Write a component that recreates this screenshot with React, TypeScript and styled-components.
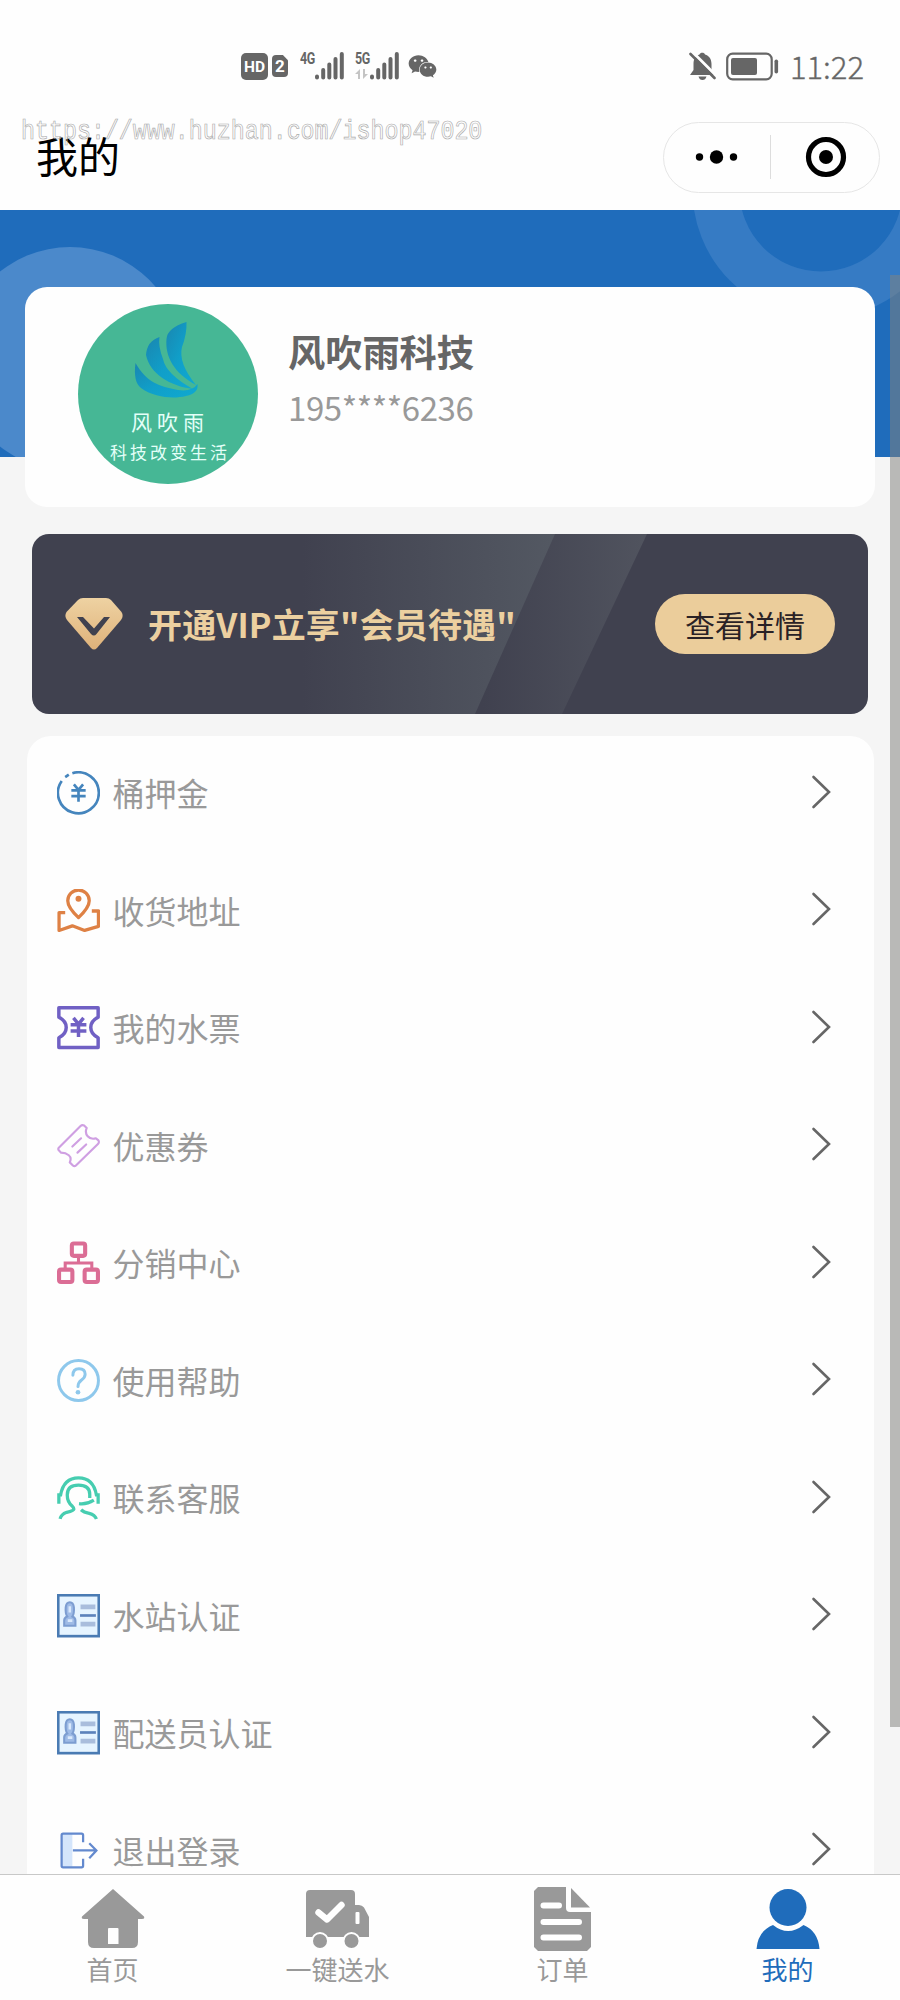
import React from "react";
import styled, { createGlobalStyle } from "styled-components";
import { FaWeixin } from "react-icons/fa";

const GlobalStyle = createGlobalStyle`
  * { box-sizing: border-box; }
  body {
    margin: 0;
    background: #fff;
    font-family: "Noto Sans CJK SC", "Noto Sans", sans-serif;
  }
  svg { display: block; flex: none; }
`;

const Page = styled.div`
  position: relative;
  width: 900px;
  height: 2000px;
  display: flex;
  flex-direction: column;
  overflow: hidden;
  background: #fefefe;
`;

const StatusBar = styled.div`
  height: 112px;
  padding: 20px 36px 0 241px;
  display: flex;
  justify-content: space-between;
  align-items: center;
  color: #666;
`;

const StatusGroup = styled.div<{ $gap?: number }>`
  display: flex;
  align-items: center;
  gap: ${(p) => p.$gap ?? 0}px;
`;

const HdBadge = styled.span`
  width: 27px;
  height: 27px;
  border-radius: 5px;
  background: #666;
  color: #fff;
  font: 700 15.5px/28px Roboto, sans-serif;
  text-align: center;
  margin-right: 4px;
`;

const SimBadge = styled.span`
  width: 16px;
  height: 22px;
  margin-right: 12px;
  border-radius: 4px;
  clip-path: polygon(0 0, 68% 0, 100% 24%, 100% 100%, 0 100%);
  background: #666;
  color: #fff;
  font: 700 17px/23px Roboto, sans-serif;
  text-align: center;
`;

const Signal = styled.div<{ $gap: number }>`
  display: flex;
  align-items: flex-start;
  height: 28px;
  margin-right: ${(p) => p.$gap}px;
`;

const SignalName = styled.div`
  width: 15px;
  display: flex;
  flex-direction: column;
  gap: 3px;
  font: 700 16px/14px Roboto, sans-serif;
  letter-spacing: -0.5px;
`;

const SignalText = styled.span`
  display: block;
  width: 19px;
  height: 14px;
  transform: scaleX(0.78);
  transform-origin: left;
`;

const Clock = styled.span`
  font-size: 31px;
  line-height: 32px;
  font-weight: 300;
  -webkit-text-stroke: 0.3px #666;
  margin-left: 1px;
`;

const TitleBar = styled.div`
  height: 98px;
  padding: 0 20px 8px 36px;
  display: flex;
  justify-content: space-between;
  align-items: center;
`;

const Title = styled.h1`
  margin: -4px 0 0;
  font-size: 42px;
  line-height: 60px;
  font-weight: 400;
  color: #000;
`;

const Watermark = styled.div`
  position: absolute;
  left: 21px;
  top: 117px;
  font: 400 23.3px/30px "Liberation Mono", monospace;
  color: transparent;
  -webkit-text-stroke: 0.6px #aaa;
  transform: scaleY(1.16);
  white-space: nowrap;
`;

const Capsule = styled.div`
  width: 217px;
  height: 71px;
  border: 1.5px solid #e6e6e6;
  border-radius: 36px;
  display: flex;
  align-items: center;
`;

const CapsuleSide = styled.div<{ $divider?: boolean }>`
  flex: 1;
  height: 44px;
  display: flex;
  align-items: center;
  justify-content: center;
  padding-left: ${(p) => (p.$divider ? 0 : 3)}px;
  border-right: ${(p) => (p.$divider ? "1px solid #ddd" : "none")};
`;

const Content = styled.main`
  position: relative;
  height: 1664px;
  padding: 77px 25px 0;
  overflow: hidden;
  background: linear-gradient(#1f6cbb 0 247px, #f5f5f5 247px);
`;

const BannerArt = styled.svg`
  position: absolute;
  left: 0;
  top: 0;
`;

const ScrollThumb = styled.div`
  position: absolute;
  right: 0;
  top: 65px;
  width: 10px;
  height: 1452px;
  background: rgba(130, 130, 126, 0.52);
`;

const ProfileCard = styled.section`
  position: relative;
  height: 220px;
  padding: 17px 53px;
  border-radius: 22px;
  background: #fefefe;
  display: flex;
  gap: 30px;
`;

const Avatar = styled.div`
  position: relative;
  width: 180px;
  height: 180px;
  border-radius: 50%;
  background: #46b795;
  overflow: hidden;
  color: #e4fff8;
  text-align: center;
  display: flex;
  flex-direction: column;
  align-items: center;
`;

const AvatarName = styled.span`
  margin-top: 7px;
  font-size: 21px;
  line-height: 24px;
  letter-spacing: 5px;
  padding-left: 4px;
`;

const AvatarSlogan = styled.span`
  margin-top: 9px;
  font-size: 17px;
  line-height: 20px;
  letter-spacing: 3px;
  padding-left: 4px;
  white-space: nowrap;
`;

const Identity = styled.div`
  padding-top: 25px;
`;

const UserName = styled.div`
  font-size: 37.2px;
  line-height: 44px;
  font-weight: 700;
  color: #666;
`;

const Phone = styled.div`
  margin-top: 14px;
  font-size: 33px;
  line-height: 40px;
  letter-spacing: -0.4px;
  color: #999;
`;

const VipCard = styled.section`
  position: relative;
  height: 180px;
  margin: 27px 7px 0;
  padding: 0 33px 0 32px;
  border-radius: 17px;
  overflow: hidden;
  background: #40414f;
  display: flex;
  align-items: center;
`;

const VipGem = styled.svg`
  position: relative;
`;

const VipText = styled.div`
  position: relative;
  flex: 1;
  margin-left: 24px;
  font-size: 34px;
  line-height: 48px;
  letter-spacing: 0.15px;
  font-weight: 700;
  color: #ecd0a0;
  white-space: nowrap;
`;

const VipButton = styled.button`
  position: relative;
  width: 180px;
  height: 60px;
  padding: 0;
  border: 0;
  border-radius: 30px;
  background: #ebcd9b;
  color: #2a2226;
  font: 400 30px/58px "Noto Sans CJK SC", sans-serif;
`;

const MenuCard = styled.ul`
  position: relative;
  list-style: none;
  margin: 22px 1px 0 2px;
  padding: 0 43.5px 0 30px;
  border-radius: 24px 24px 0 0;
  background: #fefefe;
`;

const MenuRow = styled.li`
  height: 117.5px;
  padding-top: 33px;
  display: flex;
  align-items: flex-start;
`;

const MenuIconBox = styled.span`
  margin-top: 2px;
`;

const MenuLabel = styled.span`
  flex: 1;
  margin-left: 12.5px;
  font-size: 32px;
  line-height: 46px;
  color: #999;
`;

const ChevronBox = styled.span`
  margin-top: 5.5px;
`;

const TabBar = styled.nav`
  height: 126px;
  border-top: 1px solid #c8c8c8;
  background: #fefefe;
  display: flex;
`;

const Tab = styled.a<{ $active?: boolean }>`
  flex: 1;
  padding-top: 12px;
  display: flex;
  flex-direction: column;
  align-items: center;
  font-size: 26px;
  line-height: 34px;
  color: ${(p) => (p.$active ? "#1f6cbb" : "#999")};
`;

const TabIcon = styled.span`
  height: 64.5px;
`;

const SignalBars = () => (
  <svg width="29" height="28" viewBox="0 0 29 28" stroke="#666" strokeWidth="4" strokeLinecap="round">
    <path d="M2 24.5V25.5M8.2 18V25.5M14.3 12.5V25.5M20.5 7V25.5M26.8 2V25.5" />
  </svg>
);

const BellOff = () => (
  <svg width="27" height="30" viewBox="0 0 27 30">
    <path d="M1 24 4.5 19V13C4.5 7.5 7 4.5 10.5 3.5 11 1 15.5 1 16 3.5 20 4.5 22.5 8 22.5 13V19L25.5 24Z M9.5 25.5H17.5Q16.5 29 13.5 29 10.5 29 9.5 25.5Z" fill="#666" />
    <path d="M3 .5 27 24.5" stroke="#fff" strokeWidth="3" />
    <path d="M1.5 3 25.5 27" stroke="#666" strokeWidth="2.6" strokeLinecap="round" />
  </svg>
);

const Battery = () => (
  <svg width="53" height="29" viewBox="0 0 53 29">
    <rect x="1.2" y="1.7" width="44.5" height="25.6" rx="5.5" fill="none" stroke="#666" strokeWidth="2.2" />
    <rect x="5" y="6" width="26" height="17" rx="2" fill="#666" />
    <rect x="48.5" y="7.5" width="3.6" height="14" rx="1.8" fill="#666" />
  </svg>
);

const yen = (cx: number, cy: number, s: number) =>
  `M${cx - 4.5 * s} ${cy - 8 * s}L${cx} ${cy - 2.5 * s} ${cx + 4.5 * s} ${cy - 8 * s}M${cx} ${cy - 2.5 * s}V${cy + 9 * s}M${cx - 7 * s} ${cy - 2 * s}H${cx + 7 * s}M${cx - 7 * s} ${cy + 3.5 * s}H${cx + 7 * s}`;

const IdCard = () => (
  <>
    <rect x="1.2" y="1.2" width="39.6" height="40" fill="#e6f4ff" stroke="#4a7bb3" strokeWidth="2.6" />
    <path d="M7 31V26Q7 23 10 22 8 19 8.5 13 9 8 12.5 8 16 8 16.5 13 17 19 15 22 18 23 18 26V31Z" fill="#9ebbe6" stroke="#7c9dd1" strokeWidth="2" />
    <path d="M12.5 12V18M10.5 26H15" stroke="#d9e9fc" strokeWidth="2.5" />
    <path d="M23 12.5H37.5M23 29.5H37.5" stroke="#a9bddc" strokeWidth="4.6" />
    <path d="M22.5 21H38" stroke="#5c82bb" strokeWidth="2.6" />
  </>
);

const icons: Record<string, React.ReactNode> = {
  deposit: (
    <g stroke="#4585bd" strokeWidth="2.6">
      <path d="M15 2.2A20 20 0 1 1 4.6 9.7M8 6 11.5 3.6" />
      <path d={yen(21, 21, 1)} />
    </g>
  ),
  address: (
    <g stroke="#de8145" strokeWidth="3.2" strokeLinejoin="round">
      <path d="M21 28Q10.5 18 10.5 11.5A10.5 10.5 0 0 1 31.500 11.5Q31.500 18 21 28Z" />
      <circle cx="21" cy="9.5" r="2.9" fill="#de8145" stroke="none" />
      <path d="M8 23H2V40.5L15 36 27 40.5 40.5 36.5V21.5H34" />
    </g>
  ),
  ticket: (
    <g stroke="#7060c4" strokeWidth="3.4" strokeLinejoin="round">
      <path d="M1.8 1.8H40.2V11Q33 14.5 33 21T40.2 31V40.5H1.8V31Q9 27.500 9 21T1.8 11Z" />
      <path d={yen(21, 20.5, 1.1)} />
    </g>
  ),
  coupon: (
    <g stroke="#cf9fe2" strokeWidth="2.1" strokeLinejoin="round" strokeLinecap="round">
      <path d="M1.5 23.5 23 2Q24.5 .5 26.5 1.5L29 4Q27 8.5 30 12T38 14L40.5 16Q41.5 18 40 19.5L18.5 40.5Q17 42 15.5 40.5L12.5 37.5Q14.5 33 11.5 30.5T4 28L1.5 25.5Q1 24.5 1.5 23.5Z" />
      <path d="M15 22 23.5 14M20 28 28.5 20" />
    </g>
  ),
  share: (
    <g stroke="#db6d95" strokeWidth="4">
      <rect x="14.5" y="2.5" width="13" height="12" rx="2" />
      <rect x="2" y="28" width="13" height="12" rx="2" />
      <rect x="27" y="28" width="13" height="12" rx="2" />
      <path d="M21 14V21M8 28V21.5H34V28" strokeWidth="3" />
    </g>
  ),
  help: (
    <g stroke="#8ec8ec" strokeWidth="2.9">
      <circle cx="21" cy="21" r="19.5" />
      <path d="M15.5 16Q15.5 9.5 21.5 9.5 27.5 9.5 27.5 15 27.5 18 24 20.5 20.5 23 20.5 27" strokeLinecap="round" />
      <circle cx="20.5" cy="32.500" r="2.3" fill="#8ec8ec" stroke="none" />
    </g>
  ),
  service: (
    <g stroke="#46cdb0" strokeWidth="3.2">
      <path d="M1.8 27V18.5H3.5Q6.500 1.800 21 1.800T38.500 18.5H40.2V27" />
      <path d="M3 42Q4 37.5 9.5 35.5 16.5 34 16.5 32.5 16.5 31 14.5 29 10 25 10 18.5 10 9 21 9 32 9 32 18V21.5" />
      <path d="M21.5 27Q29 28 36 23.5M23.5 33Q26 35.5 31.5 36.5 37 38 38.5 42" />
    </g>
  ),
  idcard: <IdCard />,
  exit: (
    <g stroke="#6389ce" strokeWidth="2.2">
      <path d="M5 5H15V37H5Z" fill="#d4e5fb" stroke="none" />
      <path d="M25.5 13V6Q25.5 4.5 24 4.5H6Q4.5 4.5 4.5 6V36Q4.5 37.5 6 37.5H24Q25.5 37.5 25.5 36V29" />
      <path d="M15.5 21H38.5M31.5 14 38.5 21 31.5 28.5" />
    </g>
  ),
};

const MenuIcon = ({ name }: { name: string }) => (
  <svg width="43" height="44" viewBox="0 0 42 43" fill="none">
    {icons[name]}
  </svg>
);

const Chevron = () => (
  <svg width="20" height="34" viewBox="0 0 20 34" fill="none" stroke="#666" strokeWidth="2.6" strokeLinecap="round">
    <path d="M2.500 2 18 17 2.500 32" />
  </svg>
);

const HomeIcon = () => (
  <svg width="64" height="62" viewBox="0 0 64 62" fill="#999">
    <path fillRule="evenodd" d="M32 2 63 29.5Q64 32 61 32H57V55Q57 61 51 61H13Q7 61 7 55V32H3Q0 32 1 29.5ZM28 41Q27 41 27 42V57H37.5V42Q37.5 41 36.5 41Z" />
  </svg>
);

const TruckIcon = () => (
  <svg width="66" height="62" viewBox="0 0 66 62" fill="#999">
    <path d="M5 3H46Q50 3 50 7V18H54Q57 18 59 20.5L64 30V50H1V7Q1 3 5 3Z" />
    <path d="M13.5 25.5 22 32.5 36.5 18" fill="none" stroke="#fff" strokeWidth="6.4" strokeLinecap="round" strokeLinejoin="round" />
    <rect x="50.5" y="25" width="4" height="12" rx="1" fill="#fff" />
    <circle cx="15" cy="54" r="8" stroke="#fefefe" strokeWidth="2" />
    <circle cx="46.5" cy="54" r="8" stroke="#fefefe" strokeWidth="2" />
  </svg>
);

const OrderIcon = () => (
  <svg width="57" height="64" viewBox="0 0 57 64" fill="#999">
    <path d="M4 0H32V21Q32 25 36 25H57V60L53 64H4L0 60V4Z" />
    <path d="M37 1 56 20.5H37Z" />
    <path d="M9.5 18.5H25M9.5 35H45M9.5 50.5H45" stroke="#fff" strokeWidth="6" strokeLinecap="round" />
  </svg>
);

const MineIcon = () => (
  <svg width="64" height="62" viewBox="0 0 64 62" fill="#1f6cbb">
    <circle cx="32" cy="20.5" r="18.5" />
    <path d="M17 38Q32 50 47.5 38 62 44 63.5 62H.5Q2 44 17 38Z" />
  </svg>
);

const menu = [
  { icon: "deposit", label: "桶押金" },
  { icon: "address", label: "收货地址" },
  { icon: "ticket", label: "我的水票" },
  { icon: "coupon", label: "优惠券" },
  { icon: "share", label: "分销中心" },
  { icon: "help", label: "使用帮助" },
  { icon: "service", label: "联系客服" },
  { icon: "idcard", label: "水站认证" },
  { icon: "idcard", label: "配送员认证" },
  { icon: "exit", label: "退出登录" },
];

const tabs = [
  { label: "首页", icon: <HomeIcon /> },
  { label: "一键送水", icon: <TruckIcon /> },
  { label: "订单", icon: <OrderIcon /> },
  { label: "我的", icon: <MineIcon />, active: true },
];

export default function App() {
  return (
    <Page>
      <GlobalStyle />
      <StatusBar>
        <StatusGroup>
          <HdBadge>HD</HdBadge>
          <SimBadge>2</SimBadge>
          <Signal $gap={11}>
            <SignalName>
              <SignalText>4G</SignalText>
            </SignalName>
            <SignalBars />
          </Signal>
          <Signal $gap={9}>
            <SignalName>
              <SignalText>5G</SignalText>
              <svg width="14" height="11" viewBox="0 0 14 11" fill="#c4c4c4">
                <path d="M0 5 5 0V10H3V5ZM8 0H10V5H13L8 10Z" />
              </svg>
            </SignalName>
            <SignalBars />
          </Signal>
          <FaWeixin size={29} />
        </StatusGroup>
        <StatusGroup $gap={10}>
          <BellOff />
          <Battery />
          <Clock>11:22</Clock>
        </StatusGroup>
      </StatusBar>
      <TitleBar>
        <Title>我的</Title>
        <Capsule>
          <CapsuleSide $divider>
            <svg width="44" height="14" viewBox="0 0 44 14">
              <circle cx="4.5" cy="7" r="3.7" />
              <circle cx="21.5" cy="7" r="6.7" />
              <circle cx="38.5" cy="7" r="3.7" />
            </svg>
          </CapsuleSide>
          <CapsuleSide>
            <svg width="42" height="42" viewBox="0 0 42 42">
              <circle cx="21" cy="21" r="17.5" fill="none" stroke="#000" strokeWidth="5.200" />
              <circle cx="21" cy="21" r="7" />
            </svg>
          </CapsuleSide>
        </Capsule>
      </TitleBar>
      <Watermark>https://www.huzhan.com/ishop47020</Watermark>

      <Content>
        <BannerArt width="900" height="247" viewBox="0 0 900 247">
          <circle cx="70" cy="149" r="112" fill="#4b89cb" />
          <circle cx="821" cy="-20" r="105" fill="none" stroke="#367bc4" strokeWidth="47" />
        </BannerArt>

        <ProfileCard>
          <Avatar>
            <svg width="180" height="98" viewBox="0 0 180 98">
              <defs>
                <linearGradient id="wing" x1="0" y1="0" x2="1" y2="1">
                  <stop offset="0" stopColor="#1a86b0" />
                  <stop offset="0.5" stopColor="#109fc9" />
                  <stop offset="1" stopColor="#0fa9d0" />
                </linearGradient>
              </defs>
              <g fill="url(#wing)">
                <path d="M108.5 18Q89 24 88.5 35C87 53 96 69 118 81Q100 59 104 43 109 30 108.5 18Z" />
                <path d="M81.5 33Q69 37 68 51C72 70 92 82 115 85Q88 70 85 55 80 42 81.5 33Z" />
                <path d="M57.5 59Q55 78 63 84C77 94 96 95 108 92Q121 89 119.5 80 114 88 100 86C81 82 69 79 57.5 59Z" />
              </g>
            </svg>
            <AvatarName>风吹雨</AvatarName>
            <AvatarSlogan>科技改变生活</AvatarSlogan>
          </Avatar>
          <Identity>
            <UserName>风吹雨科技</UserName>
            <Phone>195****6236</Phone>
          </Identity>
        </ProfileCard>

        <VipCard>
          <BannerArt width="836" height="180" viewBox="0 0 836 180">
            <defs>
              <linearGradient id="beamA" x1="270" x2="520" y1="0" y2="0" gradientUnits="userSpaceOnUse">
                <stop offset="0" stopColor="#40414f" />
                <stop offset="1" stopColor="#535862" />
              </linearGradient>
              <linearGradient id="beamB" x1="450" x2="610" y1="0" y2="0" gradientUnits="userSpaceOnUse">
                <stop offset="0" stopColor="#40414f" />
                <stop offset="1" stopColor="#50535e" />
              </linearGradient>
            </defs>
            <path d="M440 0H615L530 180H440Z" fill="url(#beamB)" />
            <path d="M270 0H523L443 180H270Z" fill="url(#beamA)" />
          </BannerArt>
          <VipGem width="60" height="54" viewBox="0 0 60 54">
            <defs>
              <linearGradient id="gem" x1="0" y1="0" x2="0" y2="1">
                <stop offset="0" stopColor="#eed2a2" />
                <stop offset="1" stopColor="#dfb27a" />
              </linearGradient>
            </defs>
            <path d="M19 1H42Q45 1 47 3L57.5 15Q60 19 57 23L33 51Q30 54 27 51L3 23Q0 19 2.5 15L14 3Q16 1 19 1Z" fill="url(#gem)" />
            <path d="M13 20H19L30 31.5 40 20H46L32.5 37Q30 40 27 37Z" fill="#40414f" />
          </VipGem>
          <VipText>开通VIP立享"会员待遇"</VipText>
          <VipButton>查看详情</VipButton>
        </VipCard>

        <MenuCard>
          {menu.map((item) => (
            <MenuRow key={item.label}>
              <MenuIconBox>
                <MenuIcon name={item.icon} />
              </MenuIconBox>
              <MenuLabel>{item.label}</MenuLabel>
              <ChevronBox>
                <Chevron />
              </ChevronBox>
            </MenuRow>
          ))}
        </MenuCard>
        <ScrollThumb />
      </Content>

      <TabBar>
        {tabs.map((tab) => (
          <Tab key={tab.label} $active={tab.active}>
            <TabIcon>{tab.icon}</TabIcon>
            {tab.label}
          </Tab>
        ))}
      </TabBar>
    </Page>
  );
}
